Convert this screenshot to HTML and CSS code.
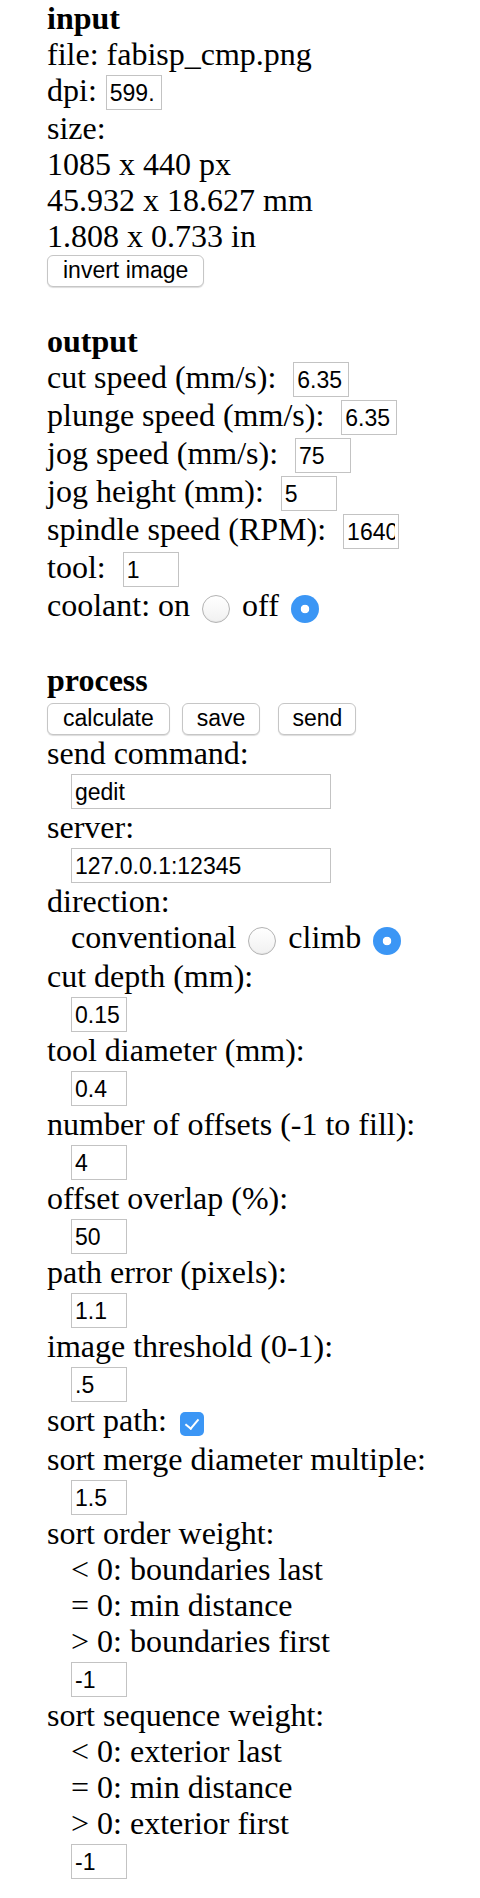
FILE: index.html
```html
<!DOCTYPE html>
<html>
<head>
<meta charset="utf-8">
<title>fab modules</title>
<link rel="stylesheet" href="styles.css">
</head>
<body>
<div class="page">
  <div class="line title">input</div>
  <div class="line">file: fabisp_cmp.png</div>
  <div class="line">dpi: <input class="box gap1" value="599."></div>
  <div class="line">size:</div>
  <div class="line">1085 x 440 px</div>
  <div class="line">45.932 x 18.627 mm</div>
  <div class="line">1.808 x 0.733 in</div>
  <div class="btnrow first"><button class="btn">invert image</button></div>
  <div class="blank"></div>

  <div class="line title">output</div>
  <div class="line">cut speed (mm/s): <input class="box gap9" value="6.35"></div>
  <div class="line">plunge speed (mm/s): <input class="box gap9" value="6.35"></div>
  <div class="line">jog speed (mm/s): <input class="box gap9" value="75"></div>
  <div class="line">jog height (mm): <input class="box gap9" value="5"></div>
  <div class="line">spindle speed (RPM): <input class="box gap9" value="16400"></div>
  <div class="line">tool: <input class="box gap9" value="1"></div>
  <div class="line tall">coolant: on <input type="radio" class="radio" name="coolant"> off <input type="radio" class="radio" name="coolant" checked></div>
  <div class="blank"></div>

  <div class="line title">process</div>
  <div class="btnrow second">
    <button class="btn gap-a">calculate</button>
    <button class="btn narrow gap-b">save</button>
    <button class="btn narrower">send</button>
  </div>
  <div class="line">send command:</div>
  <div class="line indent"><input class="box long" value="gedit"></div>
  <div class="line">server:</div>
  <div class="line indent"><input class="box long" value="127.0.0.1:12345"></div>
  <div class="line">direction:</div>
  <div class="line indent tall">conventional <input type="radio" class="radio" name="dir"> climb <input type="radio" class="radio" name="dir" checked></div>
  <div class="line">cut depth (mm):</div>
  <div class="line indent"><input class="box" value="0.15"></div>
  <div class="line">tool diameter (mm):</div>
  <div class="line indent"><input class="box" value="0.4"></div>
  <div class="line">number of offsets (-1 to fill):</div>
  <div class="line indent"><input class="box" value="4"></div>
  <div class="line">offset overlap (%):</div>
  <div class="line indent"><input class="box" value="50"></div>
  <div class="line">path error (pixels):</div>
  <div class="line indent"><input class="box" value="1.1"></div>
  <div class="line">image threshold (0-1):</div>
  <div class="line indent"><input class="box" value=".5"></div>
  <div class="line tall">sort path: <input type="checkbox" class="check" checked></div>
  <div class="line">sort merge diameter multiple:</div>
  <div class="line indent"><input class="box" value="1.5"></div>
  <div class="line">sort order weight:</div>
  <div class="line indent">&lt; 0: boundaries last</div>
  <div class="line indent">= 0: min distance</div>
  <div class="line indent">&gt; 0: boundaries first</div>
  <div class="line indent"><input class="box" value="-1"></div>
  <div class="line">sort sequence weight:</div>
  <div class="line indent">&lt; 0: exterior last</div>
  <div class="line indent">= 0: min distance</div>
  <div class="line indent">&gt; 0: exterior first</div>
  <div class="line indent"><input class="box" value="-1"></div>
</div>
</body>
</html>
```
FILE: styles.css
```css
html, body {
  margin: 0;
  padding: 0;
  background: #ffffff;
}

body {
  font-family: "Liberation Serif", "Times New Roman", serif;
  font-size: 32px;
  color: #000000;
}

.page {
  padding: 0 0 20px 47px;
}

.line {
  line-height: 36px;
  white-space: nowrap;
}

.line.tall {
  padding-bottom: 3px;
}

.title {
  font-weight: bold;
}

.blank {
  height: 36px;
}

.indent {
  padding-left: 24px;
}

.box {
  font-family: "Liberation Sans", Arial, sans-serif;
  font-size: 23px;
  line-height: 26px;
  height: 35px;
  width: 56px;
  box-sizing: border-box;
  border: 1px solid #c3c3c3;
  border-radius: 0;
  padding: 4px 3px 3px 3px;
  margin: 3px 0 0 0;
  color: #000000;
  background: #ffffff;
  outline: none;
  vertical-align: top;
}

.box.long {
  width: 260px;
}

.gap1 {
  margin-left: 1px;
}

.gap9 {
  margin-left: 9px;
}

.btnrow {
  display: flex;
  align-items: flex-start;
}

.btnrow.first {
  padding-top: 1px;
  height: 32px;
}

.btnrow.second {
  padding-top: 5px;
  height: 32px;
}

.btn {
  font-family: "Liberation Sans", Arial, sans-serif;
  font-size: 23px;
  line-height: 26px;
  height: 32px;
  box-sizing: border-box;
  padding: 1px 15px 3px 15px;
  margin: 0;
  border: 1px solid #c6c6c6;
  border-radius: 6px;
  background: #ffffff;
  color: #000000;
  box-shadow: 0 1px 1px rgba(0, 0, 0, 0.14);
}

.btn.narrow {
  padding-left: 14px;
  padding-right: 14px;
}

.btn.narrower {
  padding-left: 13px;
  padding-right: 13px;
}

.gap-a {
  margin-right: 12px;
}

.gap-b {
  margin-right: 18px;
}

.radio {
  -webkit-appearance: none;
  appearance: none;
  width: 28px;
  height: 28px;
  box-sizing: border-box;
  margin: 0 4px 0 4px;
  border-radius: 50%;
  border: 1px solid #b3b3b3;
  background: linear-gradient(#ffffff, #f1f1f1);
  box-shadow: inset 0 -1px 1px rgba(0, 0, 0, 0.05);
  vertical-align: middle;
}

.radio:checked {
  border: none;
  background: radial-gradient(circle, #ffffff 0, #ffffff 4px, #3b96f5 4.6px);
  box-shadow: none;
}

.check {
  -webkit-appearance: none;
  appearance: none;
  position: relative;
  width: 24px;
  height: 24px;
  box-sizing: border-box;
  margin: 0 0 0 5px;
  border-radius: 5px;
  background: #3b96f5;
  vertical-align: middle;
}

.check::after {
  content: "";
  position: absolute;
  left: 8px;
  top: 4px;
  width: 6px;
  height: 11px;
  border-right: 2.5px solid #ffffff;
  border-bottom: 2.5px solid #ffffff;
  transform: rotate(40deg);
}
```
